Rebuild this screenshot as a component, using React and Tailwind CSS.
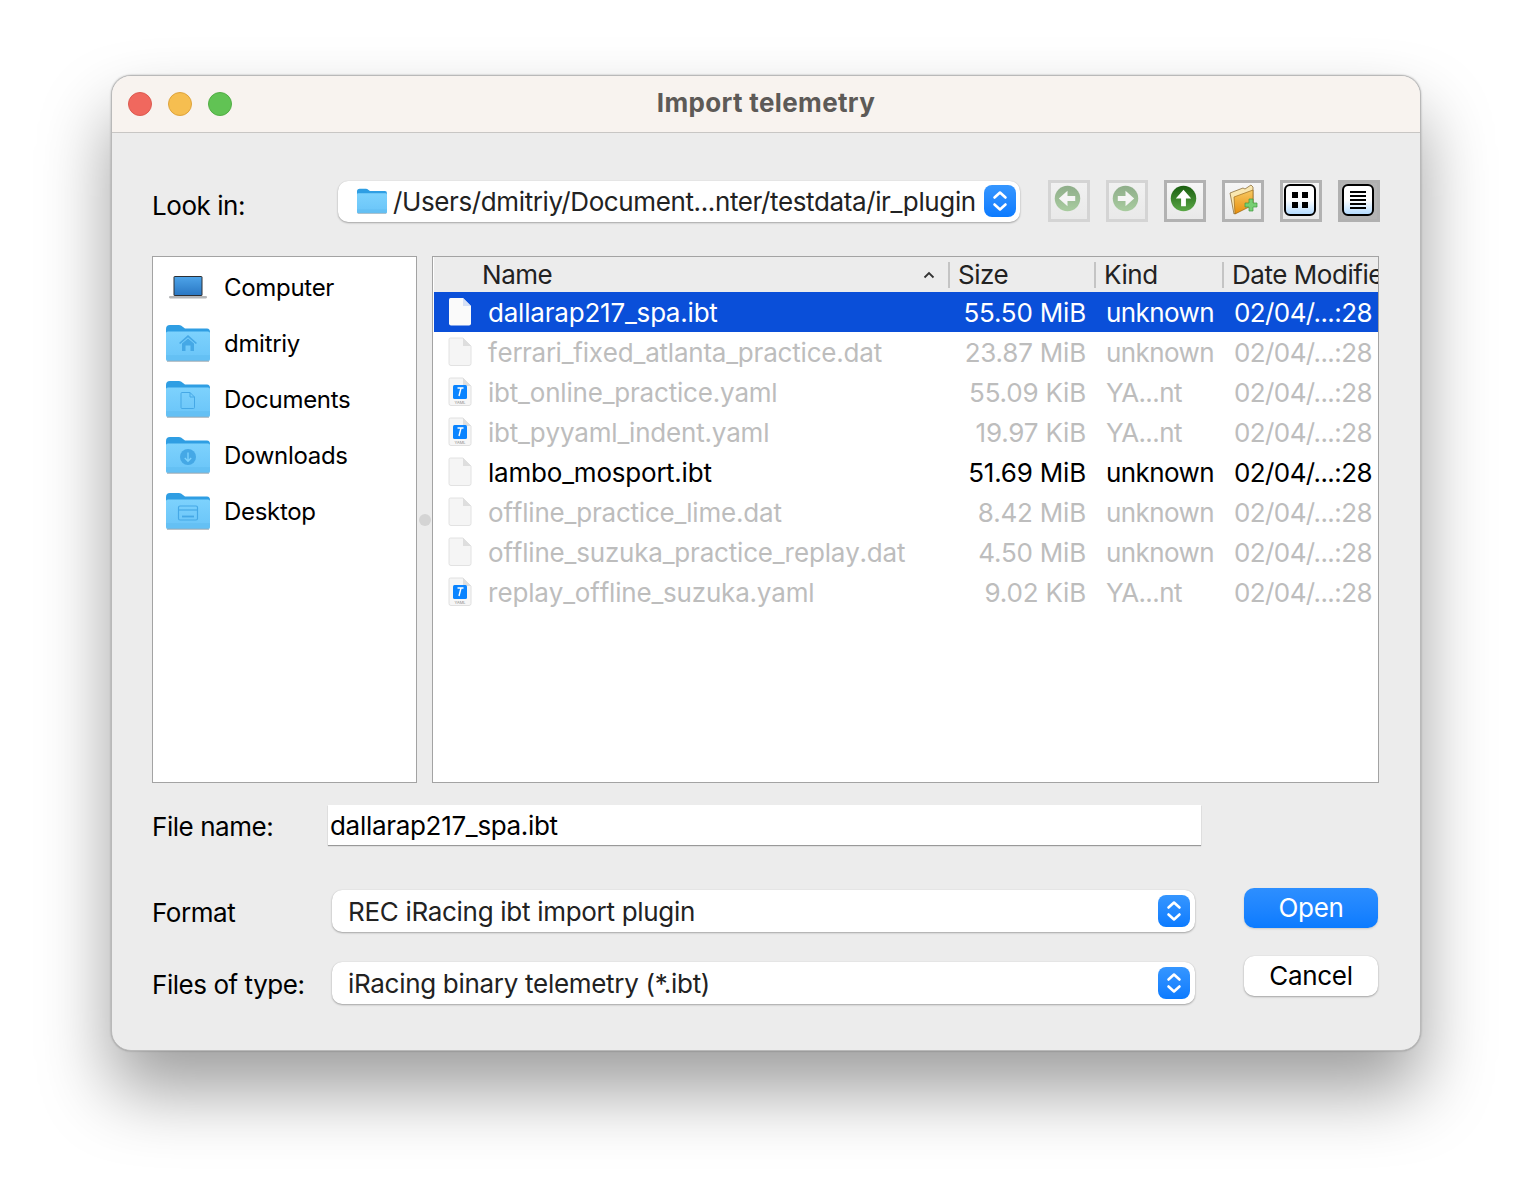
import { useId } from 'react'

const files = [
  { name: 'dallarap217_spa.ibt', size: '55.50 MiB', kind: 'unknown', icon: 'file', state: 'selected' },
  { name: 'ferrari_fixed_atlanta_practice.dat', size: '23.87 MiB', kind: 'unknown', icon: 'file', state: 'disabled' },
  { name: 'ibt_online_practice.yaml', size: '55.09 KiB', kind: 'YA...nt', icon: 'yaml', state: 'disabled' },
  { name: 'ibt_pyyaml_indent.yaml', size: '19.97 KiB', kind: 'YA...nt', icon: 'yaml', state: 'disabled' },
  { name: 'lambo_mosport.ibt', size: '51.69 MiB', kind: 'unknown', icon: 'file', state: 'normal' },
  { name: 'offline_practice_lime.dat', size: '8.42 MiB', kind: 'unknown', icon: 'file', state: 'disabled' },
  { name: 'offline_suzuka_practice_replay.dat', size: '4.50 MiB', kind: 'unknown', icon: 'file', state: 'disabled' },
  { name: 'replay_offline_suzuka.yaml', size: '9.02 KiB', kind: 'YA...nt', icon: 'yaml', state: 'disabled' },
]

function FolderIcon({ width = 44, height = 38, glyph }) {
  const id = useId()
  return (
    <svg width={width} height={height} viewBox="0 0 44 38" className="shrink-0">
      <defs>
        <linearGradient id={id} x1="0" y1="0" x2="0" y2="1">
          <stop offset="0" stopColor="#7dd2fd" />
          <stop offset="1" stopColor="#69c4f8" />
        </linearGradient>
      </defs>
      <path d="M0 5 Q0 1 4 1 H13 Q15 1 17 3 L19 4.5 H41 Q44 4.5 44 8 V14 H0Z" fill="#2f9ee3" />
      <path d="M0 9 Q0 7.5 2 7.5 H42 Q44 7.5 44 9 V35 Q44 37 42 37 H2 Q0 37 0 35Z" fill={`url(#${id})`} />
      <path d="M0 31 H44 V35 Q44 37 42 37 H2 Q0 37 0 35Z" fill="#5fbcf1" opacity="0.55" />
      <path d="M1 37.2 H43" stroke="#9aa9b3" strokeWidth="1" />
      {glyph === 'home' && (
        <g fill="#45a8e6">
          <path d="M22 11 L13 19 L14.2 20 L22 13.2 L29.8 20 L31 19Z" />
          <path d="M16 19.5 L22 14.5 L28 19.5 V27 H24.5 V21.5 H19.5 V27 H16Z" />
        </g>
      )}
      {glyph === 'doc' && (
        <path d="M16 12.5 H24 L28.5 17 V27.5 Q28.5 28.5 27.5 28.5 H16 Q15 28.5 15 27.5 V13.5 Q15 12.5 16 12.5 Z M24 12.5 V17 H28.5" fill="none" stroke="#45a8e6" strokeWidth="1" />
      )}
      {glyph === 'download' && (
        <g>
          <circle cx="22" cy="21" r="8" fill="#45a8e6" />
          <path d="M22 16.5 V25 M18.8 22 L22 25.2 L25.2 22" fill="none" stroke="#7dd2fd" strokeWidth="1.4" />
        </g>
      )}
      {glyph === 'desktop' && (
        <g fill="none" stroke="#45a8e6" strokeWidth="1.2">
          <rect x="12.5" y="14" width="19" height="14" rx="1.5" />
          <path d="M12.5 18 H31.5" />
          <path d="M16 24.5 H28" strokeWidth="1.8" />
        </g>
      )}
    </svg>
  )
}

function LaptopIcon() {
  return (
    <svg width="38" height="24" viewBox="0 0 38 24" className="shrink-0">
      <defs>
        <linearGradient id="laptop-screen" x1="0" y1="0" x2="0" y2="1">
          <stop offset="0" stopColor="#4da3e8" />
          <stop offset="1" stopColor="#2a78c4" />
        </linearGradient>
      </defs>
      <rect x="4.5" y="1" width="29" height="20" rx="1.5" fill="#2c2f33" />
      <rect x="5.5" y="2" width="27" height="18" fill="url(#laptop-screen)" />
      <rect x="0" y="21" width="38" height="2.4" rx="1.1" fill="#b4b6b8" />
    </svg>
  )
}

function FileIcon({ selected }) {
  return (
    <svg width="24" height="30" viewBox="0 0 24 30" className="shrink-0">
      <path d="M2.5 1 H15 L23 9 V26.5 Q23 28.5 21 28.5 H3 Q1 28.5 1 26.5 V2.5 Q1 1 2.5 1Z" fill={selected ? '#fafafa' : '#f5f5f5'} stroke={selected ? 'none' : '#e2e2e2'} />
      <path d="M15 1 V9 H23Z" fill={selected ? '#d6e0f5' : '#dedede'} />
    </svg>
  )
}

function YamlIcon() {
  return (
    <svg width="24" height="30" viewBox="0 0 24 30" className="shrink-0">
      <path d="M2.5 1 H15 L23 9 V26.5 Q23 28.5 21 28.5 H3 Q1 28.5 1 26.5 V2.5 Q1 1 2.5 1Z" fill="#f6f6f6" stroke="#e0e0e0" />
      <path d="M15 1 V9 H23Z" fill="#dedede" />
      <rect x="5" y="8" width="14" height="14" rx="1.5" fill="#0a84ff" />
      <path d="M9.5 11 H15.5 M13 11 L11 19" stroke="#fff" strokeWidth="1.4" fill="none" />
      <text x="12" y="27" textAnchor="middle" fontSize="4" letterSpacing="0" fill="#8a8a8a" fontFamily="Inter, sans-serif">YAML</text>
    </svg>
  )
}

function Stepper() {
  return (
    <span className="flex h-8 w-8 shrink-0 items-center justify-center rounded-lg bg-gradient-to-b from-[#3596ff] to-[#0a7bff]">
      <svg width="18" height="26" viewBox="0 0 18 26" fill="none" stroke="#fff" strokeWidth="2.6" strokeLinecap="round" strokeLinejoin="round">
        <path d="M3.5 9.5 L9 4.5 L14.5 9.5" />
        <path d="M3.5 16.5 L9 21.5 L14.5 16.5" />
      </svg>
    </span>
  )
}

function Combo({ className, children }) {
  return (
    <div className={`flex items-center rounded-[10px] bg-white shadow-[0_1px_2px_rgba(0,0,0,0.3),0_0_1px_rgba(0,0,0,0.15)] ${className}`}>
      {children}
    </div>
  )
}

function ArrowGlyph({ direction, faded }) {
  const rot = { left: 180, right: 0, up: -90 }[direction]
  const id = useId()
  return (
    <svg width="27" height="27" viewBox="0 0 28 28" className={`mr-[3px] mb-[6px] ${faded ? 'opacity-45' : ''}`}>
      <defs>
        <linearGradient id={id} x1="0" y1="0" x2="0" y2="1">
          <stop offset="0" stopColor="#1a5e10" />
          <stop offset="1" stopColor="#5aa846" />
        </linearGradient>
      </defs>
      <circle cx="14" cy="14" r="13.2" fill={`url(#${id})`} />
      <path d="M6 11.5 H14 V6 L23 14 L14 22 V16.5 H6Z" fill="#fff" transform={`rotate(${rot} 14 14)`} />
    </svg>
  )
}

function NewFolderGlyph() {
  return (
    <svg width="30" height="32" viewBox="0 0 30 32" className="mb-[2px]">
      <defs>
        <linearGradient id="new-folder-front" x1="0" y1="0" x2="0" y2="1">
          <stop offset="0" stopColor="#f6c963" />
          <stop offset="1" stopColor="#e98f0c" />
        </linearGradient>
      </defs>
      <path d="M2 9 L15 4 L17 5 L23 1 L25 3 V20 L6 30 Z" fill="#f9e7b0" stroke="#8a6d3b" strokeWidth="0.8" />
      <path d="M6 13 L25 6 V21 L7 30 Z" fill="url(#new-folder-front)" stroke="#9c6a1a" strokeWidth="0.7" />
      <path d="M21 15 H25 V19 H29 V23 H25 V27 H21 V23 H17 V19 H21Z" fill="#77cf72" stroke="#3f9a3f" strokeWidth="0.7" />
    </svg>
  )
}

function ViewGlyph({ type }) {
  return (
    <span className="mr-[2px] mb-[2px] flex h-8 w-8 items-center justify-center rounded-[6px] border-2 border-black bg-gradient-to-b from-white from-50% to-[#b5dcff]">
      {type === 'grid' ? (
        <span className="grid grid-cols-2 gap-[4px]">
          <i className="h-[6px] w-[6px] bg-black" />
          <i className="h-[6px] w-[6px] bg-black" />
          <i className="h-[6px] w-[6px] bg-black" />
          <i className="h-[6px] w-[6px] bg-black" />
        </span>
      ) : (
        <span className="flex flex-col gap-[2px]">
          {[0, 1, 2, 3, 4].map((i) => (
            <i key={i} className="h-[2px] w-[16px] bg-black" />
          ))}
        </span>
      )}
    </span>
  )
}

function ToolButton({ tone = 'normal', children }) {
  const toneClass = {
    normal: 'border-[#b2b2b2] bg-gradient-to-b from-[#f6f6f6] to-[#e9e9e9]',
    faded: 'border-[#d4d4d4] bg-gradient-to-b from-[#f1f1f1] to-[#e9e9e9]',
    active: 'border-[#b0b0b0] bg-[#b4b4b4]',
  }[tone]
  return (
    <button type="button" className={`flex h-[42px] w-[42px] items-center justify-center border-[3px] ${toneClass}`}>
      {children}
    </button>
  )
}

function SidebarItem({ label, children }) {
  return (
    <div className="flex h-14 items-center gap-[14px] pl-[13px] text-[24px] text-black">
      <span className="flex w-[44px] justify-center">{children}</span>
      <span className="pt-[1px]">{label}</span>
    </div>
  )
}

function FileRow({ file }) {
  const color = { selected: 'bg-[#0a4fd9] text-white', disabled: 'text-[#bdbdbd]', normal: 'text-black' }[file.state]
  return (
    <div className={`grid h-10 grid-cols-[500px_138px_148px_1fr] items-center pl-[14px] tracking-[-0.2px] ${color}`}>
      <div className="flex items-center gap-[16px]">
        {file.icon === 'yaml' ? <YamlIcon /> : <FileIcon selected={file.state === 'selected'} />}
        <span className="whitespace-nowrap pt-[2px] [font-kerning:none]">{file.name}</span>
      </div>
      <span className="pt-[2px] text-right whitespace-nowrap">{file.size}</span>
      <span className="pt-[2px] pl-[20px] tracking-[-0.6px] whitespace-nowrap">{file.kind}</span>
      <span className="pt-[2px] tracking-[-0.6px] whitespace-nowrap">02/04/...:28</span>
    </div>
  )
}

export default function App() {
  return (
    <div className="min-h-[1198px] bg-white pt-[75px] pl-[111px] font-['Inter',sans-serif] text-[26px] leading-none tracking-[-0.3px] text-black">
      <div className="flex h-[976px] w-[1310px] flex-col overflow-hidden rounded-[20px] border border-[#b9b9b9] bg-[#ececec] shadow-[0_40px_70px_rgba(0,0,0,0.38),0_0_2px_rgba(0,0,0,0.3)]">
        <div className="grid h-[57px] shrink-0 grid-cols-[1fr_auto_1fr] items-center border-b border-[#c8c6c4] bg-[#f8f3ef]">
          <div className="flex gap-4 pl-[16px]">
            <span className="h-6 w-6 rounded-full border border-[#dc5a50] bg-[#f0685e]" />
            <span className="h-6 w-6 rounded-full border border-[#dea33c] bg-[#f6be50]" />
            <span className="h-6 w-6 rounded-full border border-[#52ad45] bg-[#61c354]" />
          </div>
          <div className="pb-[2px] font-bold tracking-[0.35px] text-[#5d5a57]">Import telemetry</div>
          <div />
        </div>

        <div className="flex flex-1 flex-col pt-[47px] pr-[40px] pl-[40px]">
          <div className="flex h-[42px] items-center">
            <span className="w-[186px] pt-[10px] tracking-[-0.45px]">Look in:</span>
            <Combo className="h-[41px] w-[682px] pr-[4px] pl-[19px]">
              <FolderIcon width={30} height={26} />
              <span className="ml-[6px] flex-1 whitespace-nowrap pt-[2px] tracking-[-0.38px] text-[#222]">/Users/dmitriy/Document...nter/testdata/ir_plugin</span>
              <Stepper />
            </Combo>
            <div className="ml-[28px] flex gap-4">
              <ToolButton tone="faded"><ArrowGlyph direction="left" faded /></ToolButton>
              <ToolButton tone="faded"><ArrowGlyph direction="right" faded /></ToolButton>
              <ToolButton><ArrowGlyph direction="up" /></ToolButton>
              <ToolButton><NewFolderGlyph /></ToolButton>
              <ToolButton><ViewGlyph type="grid" /></ToolButton>
              <ToolButton tone="active"><ViewGlyph type="list" /></ToolButton>
            </div>
          </div>

          <div className="mt-[34px] flex h-[527px]">
            <div className="w-[265px] shrink-0 border border-[#a3a3a3] bg-white pt-[2px]">
              <SidebarItem label="Computer"><LaptopIcon /></SidebarItem>
              <SidebarItem label="dmitriy"><FolderIcon glyph="home" /></SidebarItem>
              <SidebarItem label="Documents"><FolderIcon glyph="doc" /></SidebarItem>
              <SidebarItem label="Downloads"><FolderIcon glyph="download" /></SidebarItem>
              <SidebarItem label="Desktop"><FolderIcon glyph="desktop" /></SidebarItem>
            </div>
            <div className="flex w-[15px] shrink-0 items-center justify-center">
              <span className="h-3 w-3 rounded-full bg-[#d4d4d4]" />
            </div>
            <div className="w-[947px] shrink-0 overflow-hidden border border-[#a3a3a3] bg-white pl-px">
              <div className="grid h-[35px] grid-cols-[514px_146px_128px_1fr] items-center overflow-hidden bg-[#ececec] tracking-[-0.45px] text-[#222]">
                <div className="flex items-center justify-between pr-[13px] pl-[48px]">
                  <span>Name</span>
                  <svg width="12" height="8" viewBox="0 0 12 8" fill="none" stroke="#333" strokeWidth="1.8">
                    <path d="M1.5 6.5 L6 2 L10.5 6.5" />
                  </svg>
                </div>
                <span className="flex h-[26px] items-center border-l-2 border-[#c4c4c4] pl-[8px]">Size</span>
                <span className="flex h-[26px] items-center border-l-2 border-[#c4c4c4] pl-[8px]">Kind</span>
                <span className="flex h-[26px] items-center border-l-2 border-[#c4c4c4] pl-[8px] whitespace-nowrap">Date Modified</span>
              </div>
              {files.map((file) => (
                <FileRow key={file.name} file={file} />
              ))}
            </div>
          </div>

          <div className="mt-[22px] flex h-[40px] items-center">
            <span className="w-[176px] pt-[4px] tracking-[-0.45px]">File name:</span>
            <div className="flex h-[40px] w-[873px] items-center bg-white pt-[1px] pl-[2px] shadow-[0_1px_1px_rgba(0,0,0,0.35)] [font-kerning:none]">dallarap217_spa.ibt</div>
          </div>

          <div className="mt-[43px] flex">
            <div className="flex flex-col gap-[30px] pt-[2px]">
              <div className="flex items-center">
                <span className="w-[180px] pt-[4px] tracking-[-0.45px]">Format</span>
                <Combo className="h-[42px] w-[863px] pr-[5px] pl-[16px]">
                  <span className="flex-1 pt-[2px] text-[#222]">REC iRacing ibt import plugin</span>
                  <Stepper />
                </Combo>
              </div>
              <div className="flex items-center">
                <span className="w-[180px] pt-[4px] tracking-[-0.45px]">Files of type:</span>
                <Combo className="h-[42px] w-[863px] pr-[5px] pl-[16px]">
                  <span className="flex-1 pt-[2px] text-[#222]">iRacing binary telemetry (*.ibt)</span>
                  <Stepper />
                </Combo>
              </div>
            </div>
            <div className="ml-[49px] flex flex-col gap-[28px]">
              <button type="button" className="h-[40px] w-[134px] rounded-[10px] bg-gradient-to-b from-[#2d8fff] to-[#0a7bff] pb-[1px] text-white shadow-[0_1px_2px_rgba(0,0,0,0.15)]">Open</button>
              <button type="button" className="h-[40px] w-[134px] rounded-[10px] bg-white text-black shadow-[0_1px_2px_rgba(0,0,0,0.3),0_0_1px_rgba(0,0,0,0.15)]">Cancel</button>
            </div>
          </div>
        </div>
      </div>
    </div>
  )
}
